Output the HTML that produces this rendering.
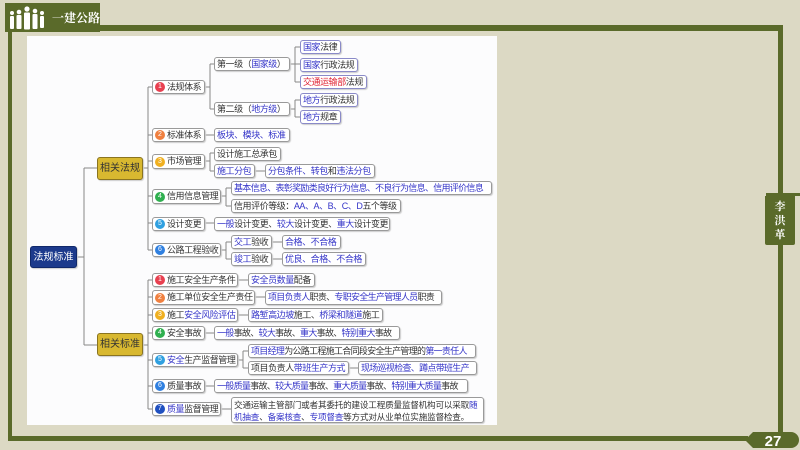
<!DOCTYPE html>
<html><head><meta charset="utf-8"><style>
*{margin:0;padding:0;box-sizing:border-box}
body{width:800px;height:450px;background:#dcd9c4;position:relative;overflow:hidden;font-family:"Liberation Sans","Noto Sans CJK SC",sans-serif}
.g{position:absolute;background:#5a6a2a}
#panel{position:absolute;left:27px;top:36px;width:470px;height:389px;background:#fcfcfd}
.n{position:absolute;border:1px solid #9a9a9a;border-radius:3px;background:#fff;font-size:9px;line-height:11px;color:#333;white-space:nowrap;padding:0 2px;display:flex;align-items:center;box-shadow:1px 1px 1px #ccc;letter-spacing:-0.45px}
.b{color:#3434c8}.r{color:#e02030}
.c{display:inline-block;flex-shrink:0;width:10px;height:10px;border-radius:50%;color:#fff;font-size:7px;line-height:10px;text-align:center;margin-right:2px;letter-spacing:0}
.bl{border-color:#8a8ac8}
</style></head><body>
<div class="g" style="left:100px;top:25px;width:683px;height:6px"></div>
<div class="g" style="left:778px;top:25px;width:5px;height:412px"></div>
<div class="g" style="left:8px;top:30px;width:4px;height:410px"></div>
<div class="g" style="left:8px;top:436px;width:740px;height:5px"></div>
<div class="g" style="left:5px;top:3px;width:95px;height:29px;display:flex;align-items:center;white-space:nowrap">
<svg width="40" height="26" viewBox="0 0 40 26" style="margin-left:3px;flex-shrink:0">
<g fill="#fff"><circle cx="4" cy="8" r="2"/><rect x="2" y="11" width="4" height="13" rx="1"/>
<circle cx="11" cy="7" r="2.3"/><rect x="8.5" y="10" width="5" height="14" rx="1"/>
<circle cx="19" cy="4" r="2.6"/><rect x="16" y="7.5" width="6" height="17" rx="1"/>
<circle cx="27" cy="6" r="2.3"/><rect x="24.5" y="9" width="5" height="15" rx="1"/>
<circle cx="34" cy="8" r="2"/><rect x="32" y="11" width="4" height="12" rx="1"/></g></svg>
<span style="color:#fff;font-size:12px;font-weight:bold;margin-left:4px;font-family:'Noto Serif CJK SC',serif">一建公路</span></div>
<div class="g" style="left:766px;top:193px;width:34px;height:3px"></div>
<div class="g" style="left:765px;top:196px;width:30px;height:49px;border-radius:0 0 2px 2px;color:#fff;font-size:11px;line-height:14px;text-align:center;padding-top:3px;font-family:'Noto Serif CJK SC',serif;font-weight:bold">李<br>洪<br>革</div>
<svg style="position:absolute;left:740px;top:431px" width="60" height="18"><path d="M5 9 L13 1 H51 A8 8 0 0 1 51 17 H13 Z" fill="#5a6a2a"/><text x="33" y="15" fill="#fff" font-size="15" font-weight="bold" font-family="Liberation Sans" text-anchor="middle">27</text></svg>
<div id="panel"></div>
<svg style="position:absolute;left:0;top:0" width="800" height="450" fill="none" stroke="#888" stroke-width="1">
<path d="M77 257H84M84 168V345M84 168H97M84 345H97"/>
<path d="M143 168H148M148 87V250M148 87H152M148 135H152M148 161H152M148 196H152M148 223H152M148 250H152"/>
<path d="M205 87H210M210 64V109M210 64H214M210 109H214"/>
<path d="M290 64H295M295 47V82M295 47H300M295 64H300M295 82H300"/>
<path d="M290 109H295M295 100V117M295 100H300M295 117H300"/>
<path d="M205 135H214M205 161H210M210 153V171M210 153H214M210 171H214M255 171H265"/>
<path d="M221 196H226M226 188V206M226 188H231M226 206H231M205 223H214"/>
<path d="M221 250H226M226 242V259M226 242H231M226 259H231M272 242H282M272 259H282"/>
<path d="M143 345H148M148 280V409M148 280H152M148 297H152M148 315H152M148 333H152M148 360H152M148 386H152M148 409H152"/>
<path d="M238 280H248M255 297H265M238 315H248M205 333H214M238 360H243M243 351V368M243 351H248M243 368H248M349 368H358M205 386H214M221 409H231"/>
</svg>
<div class="n" style="left:30px;top:246px;width:47px;height:22px;background:#1c3a8c;border-color:#10286a;color:#fff;justify-content:center;font-size:10px;letter-spacing:0">法规标准</div>
<div class="n" style="left:97px;top:157px;width:46px;height:23px;background:#d8b830;border-color:#8a7420;justify-content:center;font-size:10px;letter-spacing:0">相关法规</div>
<div class="n" style="left:97px;top:333px;width:46px;height:23px;background:#d8b830;border-color:#8a7420;justify-content:center;font-size:10px;letter-spacing:0">相关标准</div>

<div class="n" style="left:152px;top:80px;width:53px;height:14px"><span class="c" style="background:#e84050">1</span>法规体系</div>
<div class="n" style="left:214px;top:57px;width:76px;height:14px">第一级（<span class="b">国家级</span>）</div>
<div class="n" style="left:214px;top:102px;width:76px;height:14px">第二级（<span class="b">地方级</span>）</div>
<div class="n bl" style="left:300px;top:40px;width:41px;height:14px"><span class="b">国家</span>法律</div>
<div class="n bl" style="left:300px;top:58px;width:58px;height:14px"><span class="b">国家</span>行政法规</div>
<div class="n bl" style="left:300px;top:75px;width:67px;height:14px"><span class="r">交通运输部</span>法规</div>
<div class="n bl" style="left:300px;top:93px;width:58px;height:14px"><span class="b">地方</span>行政法规</div>
<div class="n bl" style="left:300px;top:110px;width:41px;height:14px"><span class="b">地方</span>规章</div>
<div class="n" style="left:152px;top:128px;width:53px;height:14px"><span class="c" style="background:#f08040">2</span>标准体系</div>
<div class="n" style="left:214px;top:128px;width:76px;height:14px"><span class="b">板块、模块、标准</span></div>
<div class="n" style="left:152px;top:154px;width:53px;height:15px"><span class="c" style="background:#f0b020">3</span>市场管理</div>
<div class="n" style="left:214px;top:147px;width:67px;height:14px">设计施工总承包</div>
<div class="n" style="left:214px;top:164px;width:41px;height:14px"><span class="b">施工分包</span></div>
<div class="n" style="left:265px;top:164px;width:110px;height:14px"><span class="b">分包条件、转包</span>和<span class="b">违法分包</span></div>
<div class="n" style="left:152px;top:189px;width:69px;height:15px"><span class="c" style="background:#30b050">4</span>信用信息管理</div>
<div class="n" style="left:231px;top:181px;width:261px;height:14px;letter-spacing:-0.7px"><span class="b">基本信息、表彰奖励类良好行为信息、不良行为信息、信用评价信息</span></div>
<div class="n" style="left:231px;top:199px;width:170px;height:14px">信用评价等级：<span class="b">AA、A、B、C、D</span>五个等级</div>
<div class="n" style="left:152px;top:217px;width:53px;height:14px"><span class="c" style="background:#30a0e0">5</span>设计变更</div>
<div class="n" style="left:214px;top:217px;width:176px;height:14px"><span class="b">一般</span>设计变更、<span class="b">较大</span>设计变更、<span class="b">重大</span>设计变更</div>
<div class="n" style="left:152px;top:243px;width:69px;height:14px"><span class="c" style="background:#3080e0">6</span>公路工程验收</div>
<div class="n" style="left:231px;top:235px;width:41px;height:14px"><span class="b">交工</span>验收</div>
<div class="n" style="left:282px;top:235px;width:59px;height:14px"><span class="b">合格、不合格</span></div>
<div class="n" style="left:231px;top:252px;width:41px;height:14px"><span class="b">竣工</span>验收</div>
<div class="n" style="left:282px;top:252px;width:84px;height:14px"><span class="b">优良、合格、不合格</span></div>

<div class="n" style="left:152px;top:273px;width:86px;height:14px"><span class="c" style="background:#e84050">1</span>施工安全生产条件</div>
<div class="n" style="left:248px;top:273px;width:67px;height:14px"><span class="b">安全员数量</span>配备</div>
<div class="n" style="left:152px;top:290px;width:103px;height:15px"><span class="c" style="background:#f08040">2</span>施工单位安全生产责任</div>
<div class="n" style="left:265px;top:290px;width:177px;height:15px;letter-spacing:-0.7px"><span class="b">项目负责人</span>职责、<span class="b">专职安全生产管理人员</span>职责</div>
<div class="n" style="left:152px;top:308px;width:86px;height:14px"><span class="c" style="background:#f0b020">3</span>施工<span class="b">安全风险评估</span></div>
<div class="n" style="left:248px;top:308px;width:135px;height:14px"><span class="b">路堑高边坡</span>施工、<span class="b">桥梁和隧道</span>施工</div>
<div class="n" style="left:152px;top:326px;width:53px;height:14px"><span class="c" style="background:#30b050">4</span>安全事故</div>
<div class="n" style="left:214px;top:326px;width:186px;height:14px;letter-spacing:-0.7px"><span class="b">一般</span>事故、<span class="b">较大</span>事故、<span class="b">重大</span>事故、<span class="b">特别重大</span>事故</div>
<div class="n" style="left:152px;top:353px;width:86px;height:14px"><span class="c" style="background:#30a0e0">5</span><span class="b">安全</span>生产监督管理</div>
<div class="n" style="left:248px;top:344px;width:228px;height:14px;letter-spacing:-0.7px"><span class="b">项目经理</span>为公路工程施工合同段安全生产管理的<span class="b">第一责任人</span></div>
<div class="n" style="left:248px;top:361px;width:101px;height:14px">项目负责人<span class="b">带班生产方式</span></div>
<div class="n" style="left:358px;top:361px;width:119px;height:14px;letter-spacing:-0.7px"><span class="b">现场巡视检查、蹲点带班生产</span></div>
<div class="n" style="left:152px;top:379px;width:53px;height:14px"><span class="c" style="background:#3080e0">6</span>质量事故</div>
<div class="n" style="left:214px;top:379px;width:254px;height:14px;letter-spacing:-0.7px"><span class="b">一般质量</span>事故、<span class="b">较大质量</span>事故、<span class="b">重大质量</span>事故、<span class="b">特别重大质量</span>事故</div>
<div class="n" style="left:152px;top:402px;width:69px;height:14px"><span class="c" style="background:#2050c0">7</span><span class="b">质量</span>监督管理</div>
<div class="n" style="left:231px;top:397px;width:253px;height:26px;white-space:normal;display:block;padding-top:1px;line-height:12px;font-size:8.6px;letter-spacing:-0.2px">交通运输主管部门或者其委托的建设工程质量监督机构可以采取<span class="b">随机抽查</span>、<span class="b">备案核查</span>、<span class="b">专项督查</span>等方式对从业单位实施监督检查。</div>
</body></html>
